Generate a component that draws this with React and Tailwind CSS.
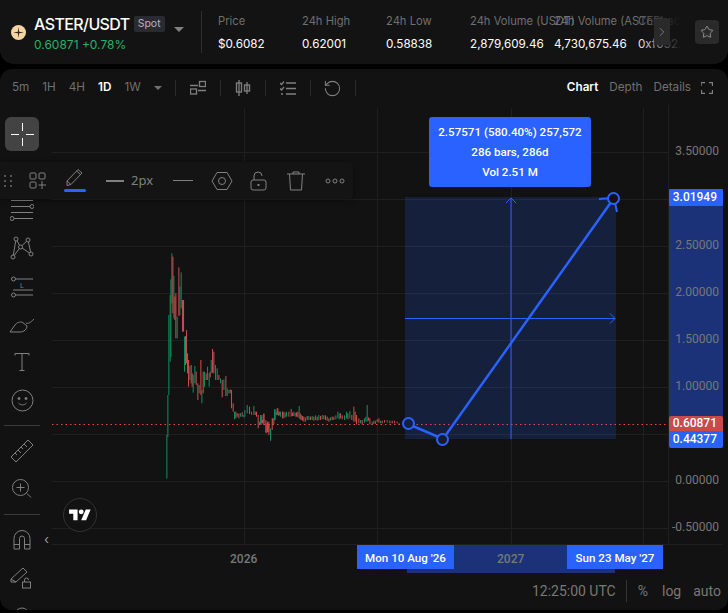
import { RotateCcw, Star, ChevronRight } from 'lucide-react';

// bars read off the reference: [x, top, bottom, green?] in 3x crop units
const early = [
  [49,585,716,1],[52,465,590,1],[55,225,465,1],[59,165,365,1],[61,118,350,1],[64,40,190,1],[67,50,220,0],[70,108,235,1],[73,170,240,0],[76,160,295,0],[80,230,295,1],[85,82,228,0],[88,140,225,1],[92,97,205,1],[96,180,275,0],[99,180,275,0],[102,290,395,1],[105,288,375,0],[108,270,370,0],[111,340,400,0],[114,360,440,0],[118,378,420,1],[122,375,430,0],[125,400,440,0],[128,405,458,1],[133,378,430,1],[137,395,435,0],[142,430,480,0],[146,435,460,1],[151,360,465,0],[154,450,490,1],[158,395,460,0],[162,395,440,1],[167,400,420,0],[171,380,420,1],[176,400,440,1],[179,395,412,0],[182,360,400,1],[186,327,398,0],[190,335,400,0],[195,375,420,1],[200,385,420,1],[205,405,420,0],[210,415,430,1],[215,420,472,0],[220,418,450,1],[226,408,468,0],[230,445,468,1],[235,450,460,1],[239,448,460,0],[243,450,505,0],[248,490,515,0],[252,515,538,1],[256,515,535,0],[260,520,530,0],[265,520,535,0],[270,520,530,1],[275,517,530,0],[280,525,532,1],[283,510,530,1],[290,495,520,1],[297,500,522,0],[303,515,525,1],[310,498,525,1],[314,515,525,0],[318,515,530,0],[323,525,565,0],[327,545,555,1],[332,530,555,1],[336,540,550,0],[340,522,550,0],[347,550,580,0],[351,565,575,1],[355,552,575,0],[360,570,602,1],[366,535,555,1],[370,535,552,0],[374,508,540,1],[382,505,525,0],[388,515,525,0],
];
const late = [
  [60,95,110,1],[66,95,115,0],[70,95,115,0],[74,98,112,1],[78,95,110,1],[85,95,110,0],[92,87,110,0],[96,98,108,0],[100,95,108,1],[104,98,110,1],[108,97,110,0],[112,95,112,0],[116,78,115,1],[119,100,118,0],[122,105,120,0],[126,108,122,0],[130,110,125,0],[135,112,125,1],[140,108,120,0],[145,108,120,1],[150,110,120,0],[155,108,120,1],[160,110,122,0],[165,106,120,1],[170,110,122,0],[175,105,120,1],[180,108,120,0],[185,105,118,1],[190,106,118,0],[195,106,120,0],[200,110,122,0],[205,115,125,0],[210,112,122,1],[215,110,120,0],[220,110,120,0],[226,106,118,1],[232,95,115,1],[236,100,118,1],[240,100,115,0],[245,106,118,0],[252,106,120,1],[258,95,115,1],[262,100,118,0],[268,93,115,1],[274,105,120,0],[280,80,125,0],[284,95,125,0],[288,105,133,0],[295,115,130,0],[300,120,130,1],[305,120,133,0],[312,115,128,1],[316,110,124,1],[320,75,125,1],[324,112,122,0],[328,115,133,0],[335,125,135,1],[340,122,132,0],[345,122,132,1],[350,118,126,0],[355,115,128,0],[360,122,130,1],[365,122,130,0],[372,120,128,0],[380,120,128,1],[388,122,130,0],[395,122,130,0],[402,122,130,0],[410,125,130,0],[416,130,135,0],
];
const lead = [
  [0,105,132,1],[4,105,128,0],[10,100,135,0],[16,120,157,0],[21,125,157,0],[25,125,165,0],[30,145,182,1],[35,115,150,0],[42,88,120,1],[47,95,106,1],[50,85,105,0],[55,95,108,0],
];

function Bars({ rows }) {
  return rows.map(([x, top, bottom, up]) => (
    <rect key={x} x={x} y={top} width="3.2" height={bottom - top} fill={up ? '#0f8a5f' : '#c84a4a'} />
  ));
}

const I = ({ children, w = 24, h = 24, box, cls = 'text-[#808080]' }) => (
  <svg width={w} height={h} viewBox={box || `0 0 ${w} ${h}`} fill="none" stroke="currentColor" strokeWidth="1" className={cls}>
    {children}
  </svg>
);

function LeftTools() {
  const Row = ({ children }) => <div className="h-[38px] shrink-0 flex items-center justify-center">{children}</div>;
  return (
    <div className="w-[52px] shrink-0 flex flex-col pt-[10px] relative">
      <div className="w-[44px] h-[38px] shrink-0 flex items-center justify-center">
        <div className="w-[34px] h-[34px] rounded-[6px] bg-[#434343] flex items-center justify-center">
          <svg width="23" height="23" viewBox="0 0 23 23" stroke="#fff" strokeWidth="1"><path d="M11.500 0v8M11.500 15v8M0 11.500h8M15 11.500h8" /></svg>
        </div>
      </div>
      <div className="w-[44px] shrink-0">
        <Row />
        <Row><I><path d="M1 2.500h22M1 8.500h19M1 14.500h22M4 20.500h19" /><circle cx="22" cy="8.500" r="2" /><circle cx="2" cy="20.500" r="2" /></I></Row>
        <Row><I><path d="M3 21L6 3M6 3l4.500 8L18 4l3 14M3 21l7.500-10L21 18" /><circle cx="3" cy="21" r="2" fill="#121212" /><circle cx="6" cy="3" r="2" fill="#121212" /><circle cx="10.500" cy="11" r="2" fill="#121212" /><circle cx="18" cy="4" r="2" fill="#121212" /><circle cx="21" cy="18" r="2" fill="#121212" /></I></Row>
        <Row><I><circle cx="3.500" cy="5" r="2" /><path d="M5.500 5H23M3 16h20M5.500 21H23" /><circle cx="3.500" cy="21" r="2" /><text x="10" y="14" fontSize="7" fill="currentColor" stroke="none" fontFamily="Roboto, sans-serif">L</text></I></Row>
        <Row><I w={26} h={24}><path d="M1 20l5-7c2-3 5-3 7-3l5 4c0 3-3 6-7 6z" /><path d="M17 11c2 1 4 0 8-4" /></I></Row>
        <Row><I w={16} h={20}><path d="M8 1.500v17M1 1.500h14M1 1.500v2M15 1.500v2M5.500 18.500h5" /></I></Row>
        <Row><I w={23} h={23}><circle cx="11.500" cy="11.500" r="10.500" /><circle cx="8" cy="9.500" r="1" fill="currentColor" /><circle cx="15" cy="9.500" r="1" fill="currentColor" /><path d="M7.500 14c2 2.500 6 2.500 8 0" /></I></Row>
      </div>
      <div className="h-px w-[36px] ml-[4px] shrink-0 bg-[#3a3a3a] my-[6px]" />
      <div className="w-[44px] shrink-0">
        <Row><I><path d="M1 18L18 1l5 5L6 23z M5 14l2 2M8 11l3 3M11 8l2 2M14 5l3 3" /></I></Row>
        <Row><I w={20} h={20}><circle cx="8.500" cy="8.500" r="8" /><path d="M4.500 8.500h8M8.500 4.500v8M15 14.500l4 4" /></I></Row>
      </div>
      <div className="h-px w-[36px] ml-[4px] shrink-0 bg-[#3a3a3a] my-[6px]" />
      <div className="w-[44px] shrink-0">
        <Row><I w={18} h={20}><path d="M1 19V8.500a8 8 0 0 1 16 0V19h-5.500V8.500a2.500 2.500 0 0 0-5 0V19zM1 14.500h5.500M11.500 14.500H17" /></I></Row>
        <Row><I><path d="M1 13L13 2l4 4L6 16H1zM1 13l5 3" /><rect x="12.500" y="16" width="8" height="6" /><path d="M14.500 16v-2a2 2 0 0 1 4 0" /></I></Row>
        <Row><I><path d="M5 20V11a7 7 0 0 1 14 0v9" /></I></Row>
      </div>
      <span className="absolute left-[44px] top-[428px] text-[13px] leading-none text-[#9a9a9a]">‹</span>
    </div>
  );
}

function DrawBar() {
  return (
    <div className="absolute left-0 top-[57px] w-[353px] h-[37px] bg-[#141414] rounded-r-[4px] shadow-[0_1px_6px_rgba(0,0,0,0.4)] flex items-center text-[#808080] z-10">
      <div className="w-[8px] ml-[4px] grid grid-cols-2 gap-[3px]">
        {[0, 1, 2, 3, 4, 5].map((i) => <span key={i} className="w-[2px] h-[2px] bg-[#555]" />)}
      </div>
      <div className="ml-[17px]">
        <I w={18} h={18}><rect x="1" y="1" width="6" height="6" rx="1" /><rect x="10" y="1" width="6" height="6" rx="1" /><rect x="1" y="10" width="6" height="6" rx="1" /><path d="M13 9v8M9.500 13h7.500" /></I>
      </div>
      <div className="relative ml-[17px] w-[22px] h-[37px] flex items-start justify-center pt-[6px]">
        <I w={18} h={18}><path d="M1 13L12 1.500l4 3.500L5 16.500l-4 1zM1 13l4 3.500M10.500 3l4 3.500" /></I>
        <span className="absolute left-0 bottom-[7px] w-[22px] h-[3px] rounded-full bg-[#2962ff]" />
      </div>
      <span className="ml-[20px] w-[18px] h-[2px] bg-[#808080]" />
      <span className="ml-[7px] text-[13px] font-['Noto_Sans',sans-serif]">2px</span>
      <span className="ml-[20px] w-[20px] h-px bg-[#808080]" />
      <div className="ml-[18px]">
        <I w={22} h={20}><path d="M6 1.500h10l5 8.500-5 8.500H6L1 10z" /><circle cx="11" cy="10" r="3.500" /></I>
      </div>
      <div className="ml-[17px]">
        <I w={18} h={20}><rect x="1" y="9" width="15" height="10" rx="2" /><path d="M4 9V5a4 4 0 0 1 8 0" /><path d="M8.500 13v2" strokeWidth="2" /></I>
      </div>
      <div className="ml-[19px]">
        <I w={18} h={20}><path d="M0 3h18M6 3V1h6v2M2.500 3l1 16h11l1-16" /></I>
      </div>
      <div className="ml-[20px]">
        <I w={20} h={6}><circle cx="3" cy="3" r="2" /><circle cx="10" cy="3" r="2" /><circle cx="17" cy="3" r="2" /></I>
      </div>
    </div>
  );
}

function Plot() {
  const hLines = [152, 199, 246, 293, 340, 387, 434, 481, 528];
  const vLines = [244, 377, 511, 643];
  return (
    <svg className="block w-[616px] h-[439px]" viewBox="52 105 616 439" fill="none">
      {hLines.map((y) => <path key={y} d={`M52 ${y + 0.5}H668`} stroke="#1f1f1f" />)}
      {vLines.map((x) => <path key={x} d={`M${x + 0.5} 108V544`} stroke="#1f1f1f" />)}
      <g transform="translate(150 240) scale(0.3333)"><Bars rows={early} /></g>
      <g transform="translate(260 380) scale(0.3333)"><Bars rows={lead} /><Bars rows={late} /></g>
      <rect x="405" y="197" width="211" height="242" fill="#2962ff" fillOpacity="0.18" />
      <path d="M52 424.500H668" stroke="#ef4444" strokeDasharray="1.500 3" />
      <path d="M511 198V439M405 318.500H615" stroke="#2962ff" />
      <path d="M506 203l5-5 5 5M610 313.500l5 5-5 5" stroke="#2962ff" />
      <path d="M408 424L443 439L614 198" stroke="#2962ff" strokeWidth="2.500" />
      <path d="M599 199l14-1M617 212l-3-14" stroke="#2962ff" strokeWidth="2" />
      <circle cx="408.500" cy="423.500" r="5.500" fill="#152040" stroke="#2962ff" strokeWidth="2" />
      <circle cx="442.500" cy="439.500" r="5.500" fill="#131c33" stroke="#2962ff" strokeWidth="2" />
      <circle cx="613.500" cy="198.500" r="5.500" fill="#121212" stroke="#2962ff" strokeWidth="2" />
    </svg>
  );
}

function PriceAxis() {
  const prices = ['3.50000', '3.00000', '2.50000', '2.00000', '1.50000', '1.00000', '0.50000', '0.00000', '-0.50000'];
  return (
    <div className="relative w-[55px] h-[439px] border-l border-[#1f1f1f] overflow-visible font-['Roboto',sans-serif] text-[12px]">
      <div className="absolute left-0 right-0 top-[101px] h-[225px] bg-[#1b3278]" />
      <div className="relative flex flex-col items-end pt-[23px] pr-[4px] text-[#787878]">
        {prices.map((p) => <div key={p} className="h-[47px] leading-[47px]">{p}</div>)}
      </div>
      <div className="absolute left-0 right-0 top-[84px] h-[17px] bg-[#2962ff] text-white font-medium text-right pr-[6px] leading-[17px] rounded-[1px]">3.01949</div>
      <div className="absolute left-0 right-0 top-[311px] h-[15px] bg-[#c84a4a] text-white font-medium text-right pr-[6px] leading-[15px] rounded-t-[2px]">0.60871</div>
      <div className="absolute left-0 right-0 top-[326px] h-[17px] bg-[#2962ff] text-white font-medium text-right pr-[6px] leading-[16px] rounded-b-[2px]">0.44377</div>
    </div>
  );
}

export default function App() {
  const stats = [
    ['Price', '$0.6082'],
    ['24h High', '0.62001'],
    ['24h Low', '0.58838'],
    ['24h Volume (USDT)', '2,879,609.46'],
    ['24h Volume (ASTER)', '4,730,675.46'],
    ['Contract', '0xf092...'],
  ];
  const frames = ['5m', '1H', '4H', '1D', '1W'];

  return (
    <div className="w-[728px] h-[613px] bg-black overflow-hidden flex flex-col font-['Inter',sans-serif]">
      <header className="h-[64px] shrink-0 bg-[#131313] rounded-b-[14px] flex items-center relative">
        <div className="ml-[11px] w-[15px] h-[15px] rounded-full bg-[#f6d3a3] flex items-center justify-center">
          <svg width="11" height="11" viewBox="0 0 10 10"><path d="M5 0l.6 4.400 4.400.6-4.400.6L5 10l-.6-4.400L0 5l4.400-.6z" fill="#3a2a1c" /></svg>
        </div>
        <div className="ml-[8px] w-[167px] relative">
          <div className="flex items-center h-[20px]">
            <span className="text-[16px] font-medium text-white leading-none tracking-[-0.6px]">ASTER/USDT</span>
            <span className="ml-[4px] h-[16px] px-[4px] rounded-[2px] bg-[#2a2a33] text-[10.5px] leading-[16px] text-[#b4b4c0]">Spot</span>
            <span className="ml-[9px] mt-[12px] w-0 h-0 border-x-[5px] border-x-transparent border-t-[5px] border-t-[#808080]" />
          </div>
          <div className="mt-[5px] text-[12px] leading-none text-[#1db668]">0.60871 +0.78%</div>
        </div>
        <div className="w-px h-[42px] bg-[#2e2e2e]" />
        <div className="ml-[16px] w-[464px] h-[64px] pt-[2px] relative overflow-hidden flex items-center">
          {stats.map(([label, value]) => (
            <div key={label} className="w-[84px] shrink-0">
              <div className="text-[11.2px] leading-none text-[#707070] whitespace-nowrap">{label}</div>
              <div className="mt-[12px] text-[11.7px] leading-none text-white whitespace-nowrap">{value}</div>
            </div>
          ))}
          <div className="absolute right-0 top-0 h-full w-[48px] bg-gradient-to-r from-transparent to-[#131313]" />
        </div>
        <div className="absolute left-[654px] top-[19px] w-[16px] h-[26px] bg-[#2a2a2a] flex items-center justify-center text-[#808080]">
          <ChevronRight size={14} strokeWidth={1.500} />
        </div>
        <div className="absolute left-[695px] top-[20px] w-[24px] h-[24px] rounded-[4px] bg-[#2a2a2a] flex items-center justify-center text-[#9a9a9a]">
          <Star size={14} strokeWidth={1.500} />
        </div>
      </header>

      <main className="mt-[5px] h-[541px] shrink-0 bg-[#121212] rounded-[12px] overflow-hidden flex flex-col relative">
        <div className="h-[38px] -mb-[2px] shrink-0 flex items-center text-[11.7px] text-[#707070]">
          <div className="ml-[12px] flex items-center gap-[13px]">
            {frames.map((f) => <span key={f} className={f === '1D' ? 'text-white font-semibold' : ''}>{f}</span>)}
          </div>
          <span className="ml-[13px] w-0 h-0 border-x-[4px] border-x-transparent border-t-[4px] border-t-[#707070]" />
          <div className="ml-[13px] w-px h-[16px] bg-[#2a2a2a]" />
          <div className="w-[44px] flex justify-center text-[#808080]">
            <I w={16} h={16}><path d="M0 5.500h8M8 10.500H16" strokeWidth="1.500" /><rect x="9.500" y="1.500" width="6" height="5" strokeWidth="1.300" /><rect x="0.500" y="9" width="6" height="5" strokeWidth="1.300" /></I>
          </div>
          <div className="w-px h-[16px] bg-[#2a2a2a]" />
          <div className="w-[44px] flex justify-center">
            <I w={16} h={16}><path d="M4 0v16M12 2v12" strokeWidth="1.300" /><rect x="1.500" y="3" width="5" height="9" strokeWidth="1.300" /><rect x="9.500" y="5" width="5" height="6" strokeWidth="1.300" /></I>
          </div>
          <div className="w-px h-[16px] bg-[#2a2a2a]" />
          <div className="w-[44px] flex justify-center">
            <I w={16} h={16}><path d="M6 3h10M6 8.500h10M6 14h10" strokeWidth="1.300" /><path d="M0 3l1.500 1.500L4 1.500M0 8.500L1.500 10 4 7" strokeWidth="1.300" /><path d="M1 14h2" strokeWidth="1.300" /></I>
          </div>
          <div className="w-px h-[16px] bg-[#2a2a2a]" />
          <div className="w-[44px] flex justify-center text-[#808080]">
            <RotateCcw size={19} strokeWidth={1.300} />
          </div>
          <div className="w-px h-[16px] bg-[#2a2a2a]" />
          <div className="ml-auto mr-[15px] flex items-center gap-[11px]">
            <span className="text-white font-semibold">Chart</span>
            <span>Depth</span>
            <span className="-mr-[1px]">Details</span>
            <I w={12} h={12} cls="text-[#808080]"><path d="M0 4V.500h4M8 .500h3.500V4M11.500 8v3.500H8M4 11.500H.500V8" strokeWidth="1.300" /></I>
          </div>
        </div>

        <div className="flex flex-1 relative overflow-hidden">
          <LeftTools />
          <div className="flex-1 flex flex-col">
            <div className="flex">
              <Plot />
              <PriceAxis />
            </div>
            <div className="relative h-[28px] w-[671px] border-t border-[#1f1f1f] font-['Roboto',sans-serif] text-[12px]">
              <div className="absolute left-[355px] top-0 w-[208px] h-[28px] bg-[#1b3278]" />
              <span className="absolute left-[178px] top-[5px] text-[#787878] font-medium">2026</span>
              <span className="absolute left-[445px] top-[5px] text-[#787878] font-medium">2027</span>
              <span className="absolute left-[305px] top-0 w-[97px] h-[24px] pt-[3px] bg-[#2962ff] text-white text-[11.6px] font-medium flex items-center justify-center">Mon 10 Aug '26</span>
              <span className="absolute left-[515px] top-0 w-[96px] h-[24px] pt-[3px] bg-[#2962ff] text-white text-[11.6px] font-medium flex items-center justify-center">Sun 23 May '27</span>
            </div>
            <div className="h-[38px] flex items-center justify-end pr-[7px] text-[#787878] font-['Roboto',sans-serif] text-[14px]">
              <span>12:25:00 UTC</span>
              <span className="ml-[10px] w-px h-[22px] bg-[#333]" />
              <span className="ml-[11px]">%</span>
              <span className="ml-[14px]">log</span>
              <span className="ml-[12px]">auto</span>
            </div>
          </div>
          <div className="absolute left-[63px] top-[393px] w-[34px] h-[34px] rounded-full border border-[#333] bg-[#121212] flex items-center justify-center">
            <svg width="22" height="17" viewBox="0 0 36 28" fill="#fff"><path d="M14 22H7V11H0V4h14v18zM28 22h-8l7.500-18h8L28 22z" /><circle cx="20" cy="8" r="4" /></svg>
          </div>
          <div className="absolute left-[429px] top-[12px] w-[162px] h-[70px] rounded-[3px] bg-[#2962ff] text-white font-['Roboto',sans-serif] text-[11.6px] font-medium flex flex-col items-center justify-center leading-[20px] z-10">
            <span>2.57571 (580.40%) 257,572</span>
            <span>286 bars, 286d</span>
            <span>Vol 2.51 M</span>
          </div>
          <DrawBar />
        </div>
      </main>
      <div className="flex-1" />
    </div>
  );
}
